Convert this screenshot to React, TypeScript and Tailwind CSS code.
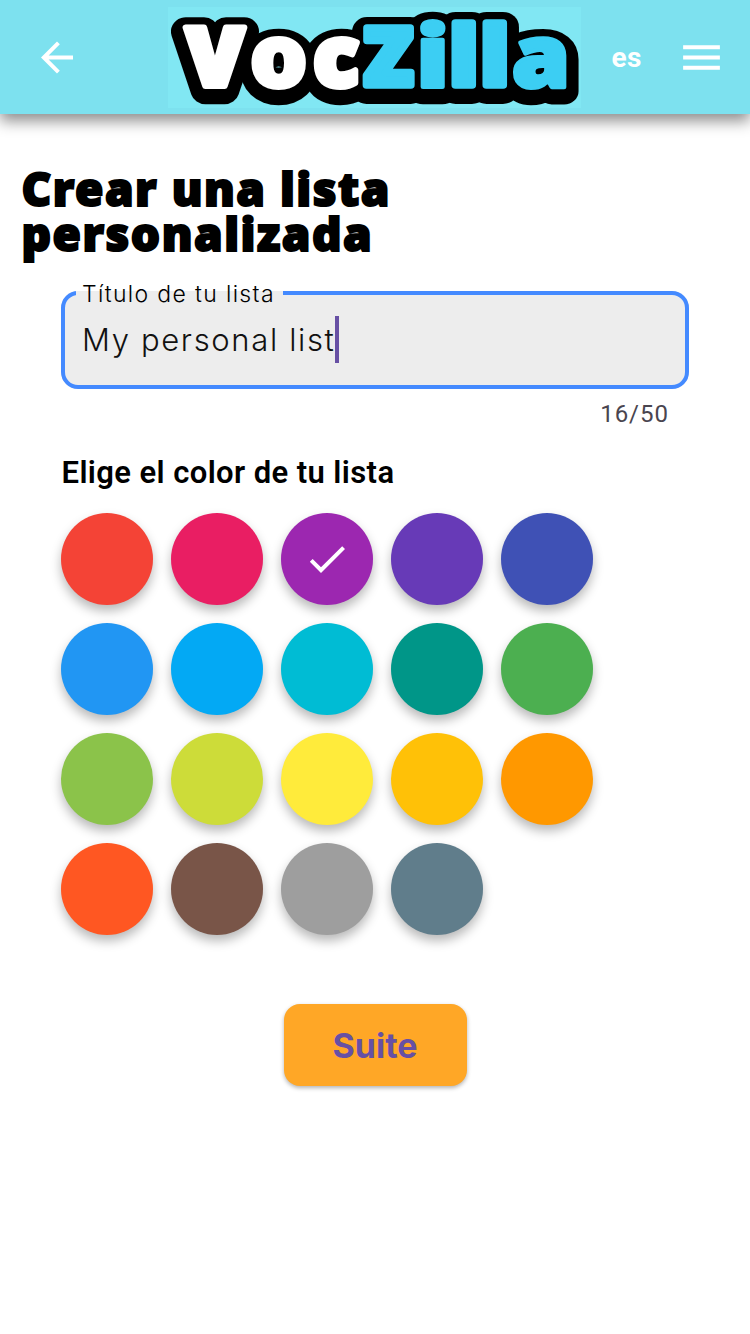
import { MdArrowBack, MdCheck, MdMenu } from "react-icons/md";

type Letter = { char: string; x: number; size: number; stretch: number; weight: number; color: string };

const letters: Letter[] = [
  { char: "V", x: 47, size: 81, stretch: 1.04, weight: 6, color: "#ffffff" },
  { char: "o", x: 110.7, size: 87, stretch: 1.045, weight: 4, color: "#ffffff" },
  { char: "c", x: 168, size: 84, stretch: 1.01, weight: 6, color: "#ffffff" },
  { char: "Z", x: 220.5, size: 80, stretch: 1, weight: 7.5, color: "#3ccef3" },
  { char: "i", x: 264.7, size: 85, stretch: 1.19, weight: 4, color: "#3ccef3" },
  { char: "l", x: 295.7, size: 82, stretch: 1.06, weight: 7.5, color: "#3ccef3" },
  { char: "l", x: 326.7, size: 82, stretch: 1.06, weight: 7.5, color: "#3ccef3" },
  { char: "a", x: 373, size: 86, stretch: 1.09, weight: 4, color: "#3ccef3" },
];

const colors = [
  "bg-[#f44336]", "bg-[#e91e63]", "bg-[#9c27b0]", "bg-[#673ab7]", "bg-[#3f51b5]",
  "bg-[#2196f3]", "bg-[#03a9f4]", "bg-[#00bcd4]", "bg-[#009688]", "bg-[#4caf50]",
  "bg-[#8bc34a]", "bg-[#cddc39]", "bg-[#ffeb3b]", "bg-[#ffc107]", "bg-[#ff9800]",
  "bg-[#ff5722]", "bg-[#795548]", "bg-[#9e9e9e]", "bg-[#607d8b]",
];
const selected = 2;

function Logo() {
  return (
    <svg
      viewBox="0 0 413 101"
      className="h-[101px] w-[413px] overflow-visible bg-[#81e7f3] font-['Noto_Sans',sans-serif] font-black"
      role="img"
      aria-label="VocZilla"
    >
      <g textAnchor="middle" strokeLinejoin="round">
        {letters.map((l, i) => (
          <text
            key={`outline-${i}`}
            aria-hidden="true"
            transform={`translate(${l.x} ${85.6 - l.weight / 2}) scale(${l.stretch} 1)`}
            fontSize={l.size}
            fill="#000"
            stroke="#000"
            strokeWidth={l.weight + 22.5}
          >
            {l.char}
          </text>
        ))}
        {letters.map((l, i) => (
          <text
            key={`face-${i}`}
            transform={`translate(${l.x} ${81.8 - l.weight / 2}) scale(${l.stretch} 1)`}
            fontSize={l.size}
            fill={l.color}
            stroke={l.color}
            strokeWidth={l.weight}
          >
            {l.char}
          </text>
        ))}
      </g>
    </svg>
  );
}

export default function App() {
  return (
    <div className="flex min-h-[1334px] w-[750px] flex-col bg-white text-black">
      <header className="flex h-[114px] items-center bg-[#7de1ef] text-white shadow-[0_7px_14px_rgba(0,0,0,0.45)]">
        <button className="ml-[33px] translate-y-[0.5px]" aria-label="Volver">
          <MdArrowBack size={48} />
        </button>
        <div className="ml-[87px]">
          <Logo />
        </div>
        <span className="ml-[30.5px] w-[65px] pt-0.5 font-['Roboto',sans-serif] text-[28px] font-bold leading-8 tracking-[0.4px]">es</span>
        <button aria-label="Menú">
          <MdMenu size={49} />
        </button>
      </header>

      <main className="flex flex-col">
        <h1 className="mt-[52px] ml-[21.5px] w-[420px] font-['Noto_Sans',sans-serif] text-[46px] font-black leading-[45px] tracking-[1.5px] [-webkit-text-stroke:2px_#000]">
          Crear una lista personalizada
        </h1>

        <div className="mx-[61px] mt-[23px] font-['Inter',sans-serif]">
          <fieldset className="h-[110px] rounded-[17px] border-4 border-[#448aff] bg-[#ededed] pl-[17px]">
            <legend className="-ml-[6px] h-[28px] w-[207px] pl-[6px] pt-[2px] text-[23px] font-[350] leading-[26px] tracking-[1.35px] whitespace-nowrap">
              Título de tu lista
            </legend>
            <div className="mt-[9px] flex items-center text-[#111]">
              <span className="text-[31px] font-[350] leading-[45px] tracking-[1.65px] whitespace-nowrap">My personal list</span>
              <span className="h-[47px] w-1 bg-[#6750a4]" />
            </div>
          </fieldset>
          <p className="mt-[10px] mr-[20px] text-right font-['Roboto',sans-serif] text-[24px] leading-[30px] tracking-[1px] text-[#49454f]">
            16/50
          </p>
        </div>

        <h2 className="mt-[24px] ml-[61.5px] font-['Roboto',sans-serif] text-[31px] font-semibold leading-[40px] tracking-[0.4px]">
          Elige el color de tu lista
        </h2>

        <div className="mt-[20px] ml-[61px] grid w-[532px] grid-cols-5 gap-[18px]">
          {colors.map((color, i) => (
            <button
              key={color}
              className={`flex h-[92px] w-[92px] items-center justify-center rounded-full text-white shadow-[0_6px_11px_rgba(0,0,0,0.28)] ${color}`}
            >
              {i === selected && <MdCheck size={48} />}
            </button>
          ))}
        </div>

        <button className="mt-[69px] h-[82px] w-[183px] self-center rounded-[16px] bg-[#ffa726] font-['Inter',sans-serif] text-[34px] font-bold text-[#6750a4] shadow-[0_2px_4px_rgba(0,0,0,0.3)]">
          Suite
        </button>
      </main>
    </div>
  );
}
